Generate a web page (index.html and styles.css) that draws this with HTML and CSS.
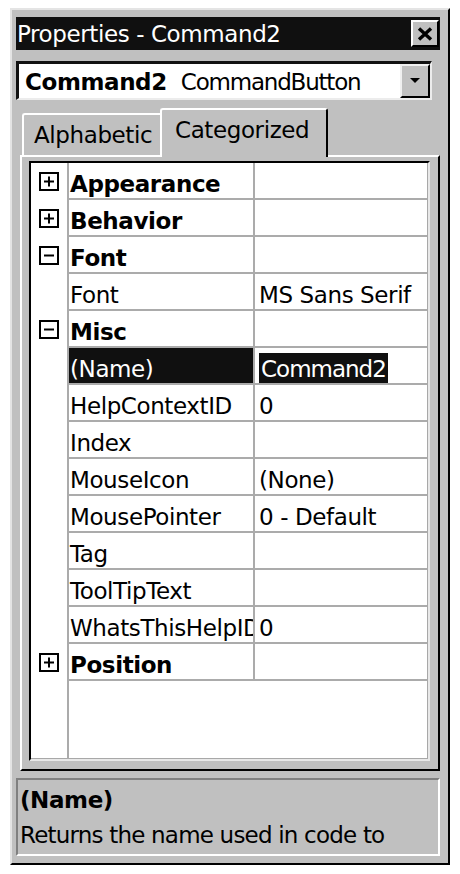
FILE: index.html
```html
<!DOCTYPE html>
<html>
<head>
<meta charset="utf-8">
<title>Properties - Command2</title>
<link rel="stylesheet" href="styles.css">
</head>
<body>
<div class="window">
  <div class="titlebar">
    <span class="title">Properties - Command2</span>
    <span class="close">
      <svg width="18" height="14" viewBox="0 0 18 14"><path d="M3 1.5 L15 12.5 M15 1.5 L3 12.5" stroke="#000" stroke-width="3.4" fill="none"/></svg>
    </span>
  </div>
  <div class="combo">
    <span class="obj-name">Command2</span>
    <span class="obj-type">CommandButton</span>
    <span class="dropbtn">
      <svg width="12" height="6" viewBox="0 0 12 6"><path d="M1 0 H11 L6 5 Z" fill="#000"/></svg>
    </span>
  </div>
  <div class="tabs">
    <div class="tab">Alphabetic</div>
    <div class="tab active">Categorized</div>
  </div>
  <div class="panel">
    <div class="list">
      <div class="row cat">
        <div class="gutter"><svg class="box" width="20" height="19" viewBox="0 0 20 19"><rect x="1" y="1" width="18" height="17" fill="#fff" stroke="#000" stroke-width="2"/><path d="M5 9.5 H15 M10 4.5 V14.5" stroke="#000" stroke-width="2"/></svg></div>
        <div class="name">Appearance</div><div class="value"></div>
      </div>
      <div class="row cat">
        <div class="gutter"><svg class="box" width="20" height="19" viewBox="0 0 20 19"><rect x="1" y="1" width="18" height="17" fill="#fff" stroke="#000" stroke-width="2"/><path d="M5 9.5 H15 M10 4.5 V14.5" stroke="#000" stroke-width="2"/></svg></div>
        <div class="name">Behavior</div><div class="value"></div>
      </div>
      <div class="row cat">
        <div class="gutter"><svg class="box" width="20" height="19" viewBox="0 0 20 19"><rect x="1" y="1" width="18" height="17" fill="#fff" stroke="#000" stroke-width="2"/><path d="M5 9.5 H15" stroke="#000" stroke-width="2"/></svg></div>
        <div class="name">Font</div><div class="value"></div>
      </div>
      <div class="row">
        <div class="gutter"></div>
        <div class="name">Font</div><div class="value">MS Sans Serif</div>
      </div>
      <div class="row cat">
        <div class="gutter"><svg class="box" width="20" height="19" viewBox="0 0 20 19"><rect x="1" y="1" width="18" height="17" fill="#fff" stroke="#000" stroke-width="2"/><path d="M5 9.5 H15" stroke="#000" stroke-width="2"/></svg></div>
        <div class="name">Misc</div><div class="value"></div>
      </div>
      <div class="row selected">
        <div class="gutter"></div>
        <div class="name">(Name)</div><div class="value"><span class="hl">Command2</span></div>
      </div>
      <div class="row">
        <div class="gutter"></div>
        <div class="name">HelpContextID</div><div class="value">0</div>
      </div>
      <div class="row">
        <div class="gutter"></div>
        <div class="name">Index</div><div class="value"></div>
      </div>
      <div class="row">
        <div class="gutter"></div>
        <div class="name">MouseIcon</div><div class="value">(None)</div>
      </div>
      <div class="row">
        <div class="gutter"></div>
        <div class="name">MousePointer</div><div class="value">0 - Default</div>
      </div>
      <div class="row">
        <div class="gutter"></div>
        <div class="name">Tag</div><div class="value"></div>
      </div>
      <div class="row">
        <div class="gutter"></div>
        <div class="name">ToolTipText</div><div class="value"></div>
      </div>
      <div class="row">
        <div class="gutter"></div>
        <div class="name">WhatsThisHelpID</div><div class="value">0</div>
      </div>
      <div class="row cat">
        <div class="gutter"><svg class="box" width="20" height="19" viewBox="0 0 20 19"><rect x="1" y="1" width="18" height="17" fill="#fff" stroke="#000" stroke-width="2"/><path d="M5 9.5 H15 M10 4.5 V14.5" stroke="#000" stroke-width="2"/></svg></div>
        <div class="name">Position</div><div class="value"></div>
      </div>
      <div class="filler"></div>
    </div>
  </div>
  <div class="desc">
    <div class="desc-title">(Name)</div>
    <div class="desc-text">Returns the name used in code to</div>
  </div>
</div>
</body>
</html>
```

FILE: styles.css
```css
html, body {
  margin: 0;
  padding: 0;
  background: #ffffff;
}

body {
  font-family: "DejaVu Sans", Verdana, sans-serif;
  font-size: 23px;
  letter-spacing: -0.4px;
  color: #000;
}

.window {
  margin: 8px 0 0 10px;
  width: 440px;
  height: 857px;
  box-sizing: border-box;
  background: #c0c0c0;
  border-style: solid;
  border-width: 2px;
  border-color: #e4e4e4 #000 #000 #e4e4e4;
  padding: 7px 8px 7px 4px;
  display: flex;
  flex-direction: column;
}

/* Title bar */
.titlebar {
  height: 33px;
  flex: 0 0 33px;
  background: #101010;
  display: flex;
  justify-content: space-between;
  align-items: flex-start;
}

.title {
  color: #fff;
  padding: 2px 0 0 1px;
  line-height: 31px;
  white-space: nowrap;
}

.close {
  margin: 3px 1px 0 0;
  width: 28px;
  height: 27px;
  box-sizing: border-box;
  background: #c0c0c0;
  border-style: solid;
  border-width: 2px;
  border-color: #fff #000 #000 #fff;
  display: flex;
  align-items: center;
  justify-content: center;
}

/* Object combo */
.combo {
  margin-top: 11px;
  margin-right: 8px;
  height: 39px;
  flex: 0 0 39px;
  box-sizing: border-box;
  background: #fff;
  border-style: solid;
  border-width: 3px 2px 2px 3px;
  border-color: #111 #ececec #ececec #111;
  display: flex;
  align-items: flex-start;
  white-space: nowrap;
}

.obj-name {
  font-weight: bold;
  padding: 2px 0 0 6px;
  line-height: 32px;
}

.obj-type {
  padding: 2px 0 0 14px;
  line-height: 32px;
  letter-spacing: -1.2px;
}

.dropbtn {
  margin-left: auto;
  width: 30px;
  height: 34px;
  box-sizing: border-box;
  background: #c0c0c0;
  border-style: solid;
  border-width: 2px;
  border-color: #f0f0f0 #000 #000 #f0f0f0;
  display: flex;
  align-items: center;
  justify-content: center;
}

/* Tabs */
.tabs {
  margin-top: 8px;
  height: 47px;
  flex: 0 0 47px;
  display: flex;
  align-items: flex-end;
  padding-left: 6px;
}

.tab {
  height: 42px;
  box-sizing: border-box;
  width: 138px;
  border-style: solid;
  border-width: 2px 0 0 2px;
  border-color: #fff;
  border-top-left-radius: 3px;
  padding: 7px 0 0 10px;
  line-height: 26px;
  white-space: nowrap;
}

.tab.active {
  width: 168px;
  height: 49px;
  margin-bottom: -2px;
  position: relative;
  z-index: 1;
  background: #c0c0c0;
  border-width: 2px 2px 0 2px;
  border-color: #fff #000 #000 #fff;
  border-top-right-radius: 3px;
  padding: 7px 0 0 13px;
}

/* Panel */
.panel {
  margin-left: 4px;
  height: 616px;
  flex: 0 0 616px;
  box-sizing: border-box;
  border-style: solid;
  border-width: 2px;
  border-color: #fff #000 #000 #fff;
  padding: 4px 8px 8px 7px;
  display: flex;
}

.list {
  flex: 1;
  background: #fff;
  border-style: solid;
  border-width: 2px;
  border-color: #000 #e8e8e8 #e8e8e8 #000;
  box-shadow: inset -1px -1px 0 #a8a8a8;
  display: flex;
  flex-direction: column;
}

.row {
  display: flex;
  height: 37px;
  flex: 0 0 37px;
}

.gutter {
  width: 36px;
  flex: 0 0 36px;
  box-sizing: border-box;
  padding: 9px 0 0 8px;
}

.box {
  display: block;
}

.name,
.value {
  box-sizing: border-box;
  border-left: 2px solid #ababab;
  border-bottom: 2px solid #ababab;
  padding-top: 8px;
  line-height: 26px;
  white-space: nowrap;
  overflow: hidden;
}

.name {
  width: 186px;
  flex: 0 0 186px;
  padding-left: 1px;
}

.value {
  flex: 1;
  padding-left: 4px;
  margin-right: 1px;
}

.cat .name {
  font-weight: bold;
}

.selected .name {
  background: #101010;
  background-clip: padding-box;
  color: #fff;
}

.hl {
  background: #101010;
  color: #fff;
  padding: 3px 2px 1px;
  letter-spacing: -1px;
}

.filler {
  flex: 1;
  margin-left: 36px;
  border-left: 2px solid #ababab;
}

/* Description */
.desc {
  margin-top: 7px;
  height: 78px;
  flex: 0 0 78px;
  box-sizing: border-box;
  background: #c0c0c0;
  border-style: solid;
  border-width: 2px;
  border-color: #808080 #fff #fff #808080;
  padding: 3px 0 0 2px;
  line-height: 35px;
  white-space: nowrap;
  overflow: hidden;
}

.desc-title {
  font-weight: bold;
}

.desc-text {
  letter-spacing: -0.8px;
}
```
